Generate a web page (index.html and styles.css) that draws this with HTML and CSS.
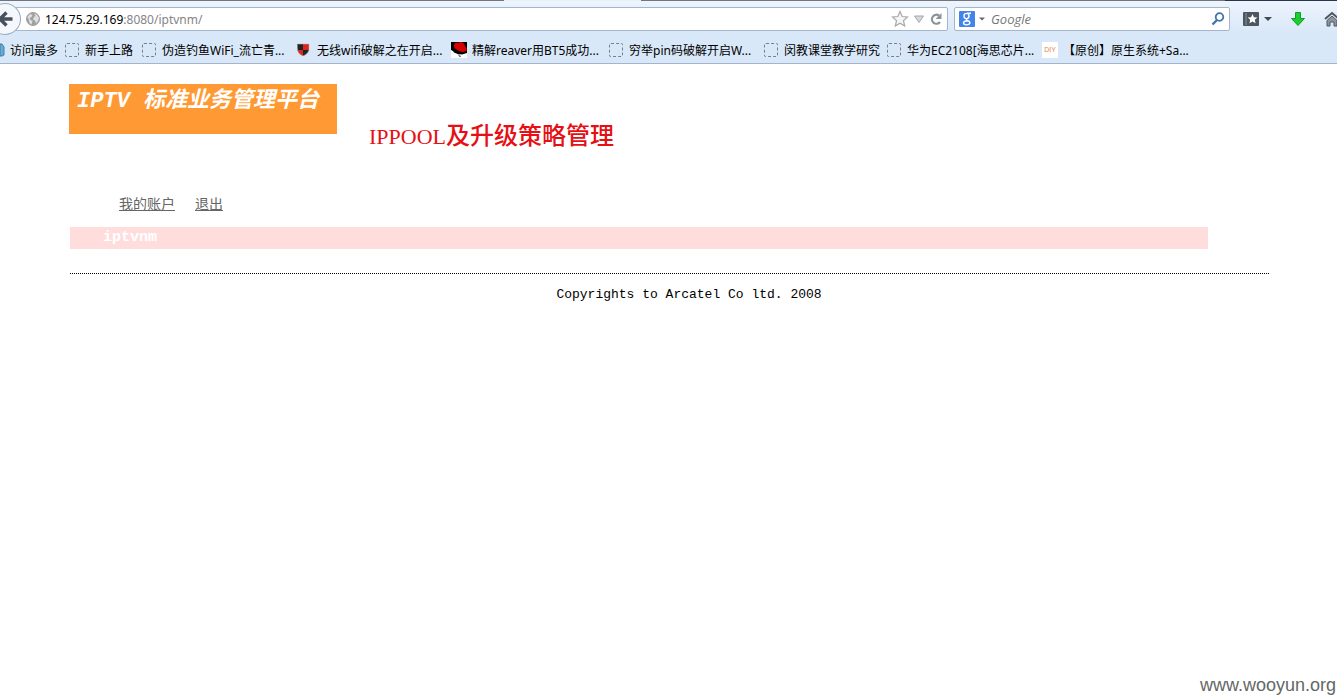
FILE: index.html
```html
<!DOCTYPE html>
<html lang="zh-CN">
<head>
<meta charset="utf-8">
<title>IPTV 标准业务管理平台</title>
<link rel="stylesheet" href="styles.css">
</head>
<body>
<header class="chrome">
  <div class="tabstrip"><span class="tab-active"></span><span class="tab-rest"></span><span class="tab-end"></span></div>
  <div class="toolbar">
    <button class="back" type="button" aria-label="Back"><svg width="32" height="32" viewBox="0 0 32 32"><path d="M11 16 17.500 9.500M11 16 17.500 22.500M11.500 16H23.500" fill="none" stroke="#47515d" stroke-width="3.400"/></svg></button>
    <div class="address">
      <svg class="globe" width="14" height="14" viewBox="0 0 14 14"><circle cx="7" cy="7" r="6.500" fill="#a0a0a0" stroke="#a0a0a0"/><path d="M1.500 5 4 2l2.500 1-1 2-2 1 1 2 2 1-1 3.500-2-1.500L3 8zM8 1.500l3 1.500 2 3-1 3-2 2.500-1-3-2-1 1-2.500 1.500-1z" fill="#e0e0e0"/></svg>
      <label class="host" for="url">124.75.29.169</label><input class="url" id="url" type="text" value=":8080/iptvnm/">
      <button class="tool" type="button" aria-label="Bookmark"><svg width="18" height="18" viewBox="0 0 18 18"><path d="m9 1.500 2.200 5 5.300.5-4 3.600 1.200 5.400L9 13.200 4.300 16l1.200-5.400-4-3.600 5.300-.5z" fill="#f5f5f5" stroke="#a8a8a8" stroke-width="1.200"/></svg></button>
      <button class="tool" type="button" aria-label="History"><svg width="10" height="18" viewBox="0 0 10 18"><path d="M.5 6h9L5 12.500z" fill="#d4d7db" stroke="#a3a8ae"/></svg></button>
      <button class="tool" type="button" aria-label="Reload"><svg width="14" height="18" viewBox="0 0 14 18"><path d="M10 5.500A4.500 4.500 0 1 0 11 12" fill="none" stroke="#8c939b" stroke-width="2.200"/><path d="M12.500 3v6h-6z" fill="#8c939b"/></svg></button>
    </div>
    <div class="search">
      <button class="engine" type="button" aria-label="Search engine"><svg width="28" height="16" viewBox="0 0 28 16"><rect width="16" height="16" rx="1" fill="#4285e8"/><g fill="none" stroke="#fff" stroke-width="1.400"><ellipse cx="7.500" cy="5" rx="2.500" ry="2.600"/><path d="M8 2.200h4M9 7.200q-3 1-.5 2.300 2.500 1 2.500 2.400-.5 2-3.500 2-3-.2-3-1.900 0-2 4.500-2.200"/></g><path d="M20 6.500h6L23 9.500z" fill="#666"/></svg></button>
      <input class="query" type="text" placeholder="Google" aria-label="Search">
      <button class="tool" type="button" aria-label="Search"><svg width="14" height="14" viewBox="0 0 14 14"><circle cx="8.500" cy="5" r="3.800" fill="none" stroke="#3d76ad" stroke-width="1.800"/><path d="M6 8 1.500 12.500" stroke="#3d76ad" stroke-width="2.400"/></svg></button>
    </div>
    <div class="actions">
      <button class="tool" type="button" aria-label="Bookmarks menu"><svg width="29" height="16" viewBox="0 0 29 16"><rect y="1" width="16" height="14" rx="1" fill="#4c5660"/><path d="M3 2v12" stroke="#8a939c"/><path d="m9.500 3 1.400 3.200 3.500.3-2.600 2.300.8 3.500-3.100-1.900-3.100 1.900.8-3.500L4.600 6.500l3.500-.3z" fill="#fff"/><path d="M21 6h8l-4 4z" fill="#414b55"/></svg></button>
      <button class="tool" type="button" aria-label="Downloads"><svg width="14" height="16" viewBox="0 0 14 16"><path d="M4.500 1.500h5v6h4L7 14.500.5 7.500h4z" fill="#18cf2b" stroke="#16962b"/></svg></button>
      <button class="tool" type="button" aria-label="Home"><svg width="16" height="16" viewBox="0 0 16 16"><path d="m1 8 7-6 7 6" fill="none" stroke="#4c5660" stroke-width="2"/><path d="M3 9.500 8 5l5 4.500V15h-3v-4H6v4H3z" fill="#8d969f" stroke="#4c5660"/></svg></button>
    </div>
  </div>
  <nav class="bookmarks">
    <a href="#" class="mark first"><svg width="5" height="16" viewBox="0 0 5 16"><path d="M0 2h2l2 3v8l-2 1H0z" fill="#65add8" stroke="#427da6"/></svg>访问最多</a>
    <a href="#" class="mark"><i class="blank"></i>新手上路</a>
    <a href="#" class="mark"><i class="blank"></i>伪造钓鱼WiFi_流亡青...</a>
    <a href="#" class="mark"><svg width="16" height="16" viewBox="0 0 16 16"><path d="M1 2 7 2V8H1.500z" fill="#222"/><path d="M7 2h6v6H7z" fill="#d8261c"/><path d="M1.500 8H7v6Q2 12 1.500 8z" fill="#d8261c"/><path d="M7 8h6q-1 4-6 6z" fill="#222"/><path d="M1.500 2H13v6q-1 4-6 6Q2 12 1.500 8z" fill="none" stroke="#b9b0b0" stroke-width=".5"/></svg>无线wifi破解之在开启...</a>
    <a href="#" class="mark"><svg width="16" height="16" viewBox="0 0 16 16"><path d="M0 0h16v16H0z" fill="#000"/><path d="M0 8l4 2 3 2 4 .5 5-1.500v5H0z" fill="#fff"/><path d="M3 3q1-3 4-2l2-1q4 0 5 4 3 3 1 5-4 2-8-.5Q2 6 3 3z" fill="#d50000"/><path d="M1 7q3 4 9 4l-2 1.500-5-2z" fill="#000"/><path d="m7 13 3 1-1 1z" fill="#000"/></svg>精解reaver用BT5成功...</a>
    <a href="#" class="mark"><i class="blank"></i>穷举pin码破解开启W...</a>
    <a href="#" class="mark"><i class="blank"></i>闵教课堂教学研究</a>
    <a href="#" class="mark"><i class="blank"></i>华为EC2108[海思芯片...</a>
    <a href="#" class="mark"><svg width="16" height="16" viewBox="0 0 16 16"><path d="M0 0h16v16H0z" fill="#fff"/><text x="8" y="10" text-anchor="middle" class="diy">DIY</text></svg>【原创】原生系统+Sa...</a>
  </nav>
</header>
<main class="page">
  <div class="masthead">
    <div class="banner"><b class="banner-latin">IPTV</b> <b>标准业务管理平台</b></div>
    <h1 class="title"><span class="title-latin">IPPOOL</span>及升级策略管理</h1>
  </div>
  <nav class="account"><a href="#">我的账户</a><a href="#">退出</a></nav>
  <div class="strip">iptvnm</div>
  <hr class="rule">
  <footer class="copyright">Copyrights to Arcatel Co ltd. 2008</footer>
</main>
<div class="watermark">www.wooyun.org</div>
</body>
</html>
```
FILE: styles.css
```css
* { box-sizing: border-box; }
body {
  margin: 0;
  min-height: 100vh;
  display: flex;
  flex-direction: column;
  overflow-x: hidden;
  background: #fff;
  font-family: "Liberation Mono", "Noto Sans CJK SC", monospace;
}
button { border: 0; padding: 0; background: none; }
svg { display: block; flex: none; }

.chrome {
  height: 64px;
  overflow: hidden;
  background: linear-gradient(#eef5fd, #d9e8f8 32px);
  border-bottom: 1px solid #a3b4cc;
  font-family: "Noto Sans", "Noto Sans CJK SC", sans-serif;
  font-size: 12px;
}
.tabstrip { display: flex; height: 1px; background: #70757f; padding-left: 504px; }
.tab-active { width: 137px; background: #e8f0fa; }
.tab-rest { flex: 1; }
.tab-end { width: 112px; background: #283650; }
.toolbar { display: flex; align-items: center; height: 36px; }
.back {
  width: 32px;
  height: 32px;
  margin-left: -11px;
  margin-right: -8px;
  flex: none;
  border-radius: 50%;
  background: #f4f8fd;
  box-shadow: inset 0 0 0 1px #9aabc1;
  z-index: 1;
}
.address, .search {
  display: flex;
  align-items: center;
  height: 24px;
  background: #fff;
  border: 1px solid #a5b5cb;
  border-radius: 2px;
}
.address { flex: 1; padding: 0 4px 0 12px; gap: 5px; }
.host { color: #000; }
.url {
  flex: 1;
  min-width: 0;
  margin-left: -5px;
  padding: 0;
  border: 0;
  outline: 0;
  background: none;
  color: #858585;
  font: inherit;
}
.search { width: 276px; margin-left: 6px; padding: 0 4px; }
.engine { margin-right: 4px; }
.query {
  flex: 1;
  min-width: 0;
  padding: 0;
  border: 0;
  outline: 0;
  background: none;
  font: italic 13px "Open Sans", sans-serif;
}
.query::placeholder { color: #777; }
.actions { display: flex; gap: 19px; width: 107px; padding-left: 13px; }

.bookmarks {
  display: grid;
  grid-template-columns: 64px 77px 155px 155px 157px 155px 123px 156px auto;
  align-items: center;
  height: 26px;
}
.mark {
  display: flex;
  align-items: center;
  gap: 5px;
  white-space: nowrap;
  color: #000;
  text-decoration: none;
}
.blank { width: 14px; height: 14px; margin: 0 1px; border: 1px dashed #777f89; border-radius: 2px; }
.diy { font: 7px "Liberation Sans", sans-serif; fill: #e28a3a; }

.page { padding: 20px 29px 0 70px; }
.masthead { display: flex; gap: 32px; margin-left: -1px; }
.banner {
  width: 268px;
  height: 50px;
  padding: 4px 8px;
  background: #ff9933;
  color: #fff;
  font-size: 22px;
  font-style: italic;
  line-height: 28px;
  white-space: nowrap;
}
.banner-latin { font-size: 22px; }
.title {
  margin: 38px 0 0;
  color: #e60f14;
  font-size: 24px;
  font-weight: 500;
  line-height: 30px;
}
.title-latin { font-family: "Liberation Serif", serif; font-size: 22px; }
.account { display: flex; gap: 20px; margin: 40px 0 0 49px; font-size: 14px; line-height: 24px; }
.account a { color: #666; }
.strip {
  height: 22px;
  margin: 10px 100px 0 0;
  padding-left: 33px;
  background: #ffdddd;
  color: #fff;
  font-size: 15px;
  font-weight: bold;
  line-height: 22px;
}
.page .strip { margin-right: 100px; }
.rule { margin: 24px 39px 0 0; border: 0; border-top: 1px dotted #000; }
.copyright { margin-top: 11px; text-align: center; font-size: 13px; line-height: 20px; }
.watermark {
  margin-top: auto;
  padding-right: 1px;
  text-align: right;
  color: #666;
  font: 18px/20px "Liberation Sans", sans-serif;
}
```
